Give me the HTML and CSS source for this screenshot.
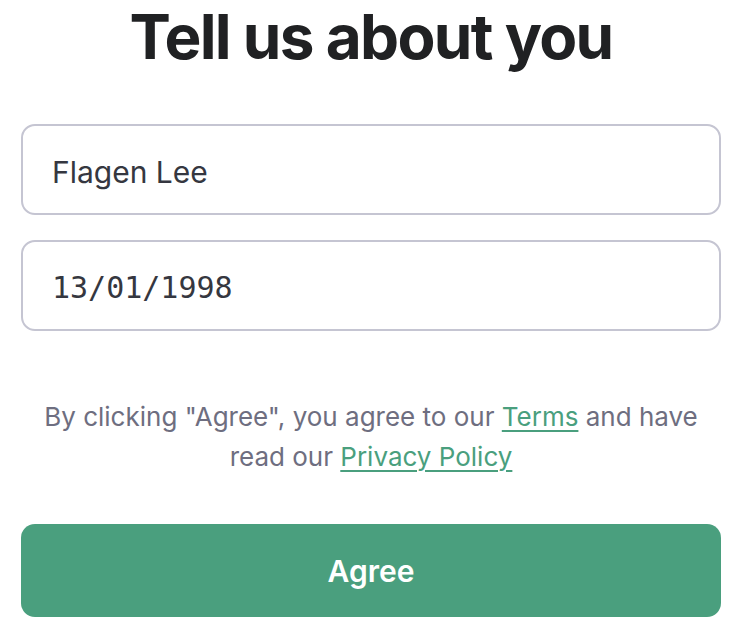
FILE: index.html
```html
<!DOCTYPE html>
<html>
<head>
<meta charset="utf-8">
<link rel="stylesheet" href="styles.css">
</head>
<body>
<main class="page">
  <h1 class="title">Tell us about you</h1>
  <form class="form">
    <div class="field"><span class="value">Flagen Lee</span></div>
    <div class="field"><span class="value mono">13/01/1998</span></div>
    <p class="legal">By clicking "Agree", you agree to our <a href="#" class="link">Terms</a> and have read our <a href="#" class="link">Privacy Policy</a></p>
    <button type="button" class="agree">Agree</button>
  </form>
</main>
</body>
</html>
```
FILE: styles.css
```css
html, body {
  margin: 0;
  padding: 0;
  background: #ffffff;
}
.page {
  width: 700px;
  padding: 0 15px 0 21px;
  font-family: Inter, "Liberation Sans", sans-serif;
}
.title {
  margin: 0;
  font-size: 62px;
  line-height: 74px;
  font-weight: 700;
  letter-spacing: -1.7px;
  text-align: center;
  color: #202123;
}
.form {
  display: flex;
  flex-direction: column;
  margin-top: 50px;
}
.field {
  box-sizing: border-box;
  height: 91px;
  border: 2px solid #c5c5d2;
  border-radius: 14px;
  display: flex;
  align-items: center;
  padding-left: 29px;
  margin-bottom: 25px;
}
.field + .field {
  margin-bottom: 0;
}
.value {
  font-size: 30px;
  color: #353740;
  padding-top: 4px;
}
.mono {
  font-family: "DejaVu Sans Mono", "Liberation Mono", monospace;
  font-size: 30px;
}
.legal {
  margin: 66px 0 0;
  font-size: 26px;
  line-height: 40px;
  text-align: center;
  color: #6e6e80;
  padding: 0 20px;
}
.link {
  color: #4a9f7e;
  text-decoration: underline;
  text-underline-offset: 4px;
  text-decoration-thickness: 2px;
}
.agree {
  margin-top: 47px;
  height: 93px;
  border: none;
  border-radius: 14px;
  background: #4a9f7e;
  color: #ffffff;
  font-family: Inter, "Liberation Sans", sans-serif;
  font-size: 30px;
  font-weight: 600;
  cursor: pointer;
}
```
